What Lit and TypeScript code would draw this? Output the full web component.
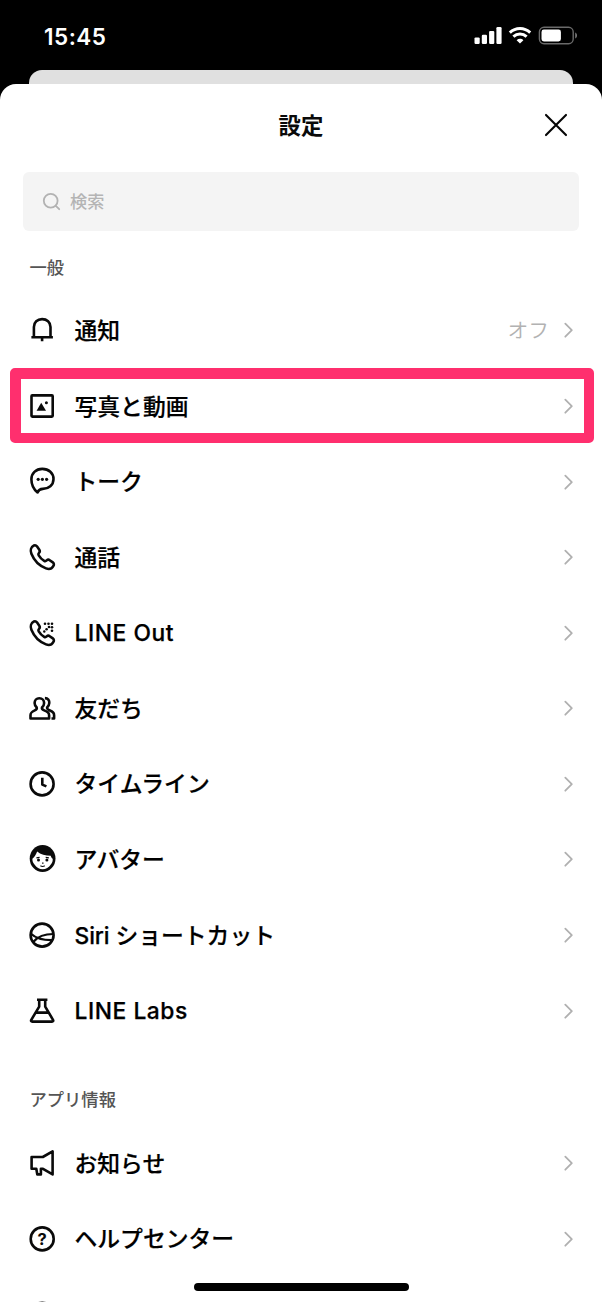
import { LitElement, html, css, svg, nothing, type SVGTemplateResult } from "lit";
import { customElement, property } from "lit/decorators.js";

const handset = svg`<path d="M7.9 4.5C9.3 3.9 10.3 4.5 11.1 5.6L13.3 8.7C14.1 9.9 13.9 10.9 13 11.8C12.1 12.7 12.1 13.3 12.7 14.3C14.1 16.7 15.8 18.4 18.2 19.8C19.2 20.4 19.8 20.3 20.7 19.4C21.6 18.6 22.6 18.4 23.7 19.2L26.8 21.4C28.1 22.3 28.2 23.8 27.3 25.1C25.8 27.7 23 28.6 20 27.4C13.7 25 8 19.3 5.4 12.8C4.1 9.4 5 5.8 7.9 4.5Z"/>`;

const icons: Record<string, SVGTemplateResult> = {
  bell: svg`<path d="M5.4 23.3H26.9M7.9 23.3V13C7.9 8.2 11.4 5.1 16.1 5.1S24.5 8.2 24.5 13V23.3M16.1 24V27.2"/>`,
  photo: svg`<rect x="5.5" y="5.4" width="21.2" height="21.2" rx="0.8"/>
    <path class="solid" d="M10.6 20.8L15.2 12.8L20 20.8Z"/><circle class="solid" cx="20.4" cy="12.7" r="1.5"/>`,
  talk: svg`<path d="M16.3 2.9C22.8 2.9 27.5 7.2 27.5 13C27.5 19.2 22.6 22.8 16.8 22.9C14 23 12.4 24.2 11.5 26.4C7.5 23.2 5.4 18.6 5.4 13.3C5.4 7.4 9.8 2.9 16.3 2.9Z"/>
    <g class="solid"><circle cx="12.2" cy="13.3" r="1.6"/><circle cx="16.4" cy="13.3" r="1.6"/><circle cx="20.6" cy="13.3" r="1.6"/></g>`,
  call: handset,
  lineout: svg`${handset}<g class="solid">
    <circle cx="19" cy="6.8" r="1.3"/><circle cx="22.5" cy="6.8" r="1.3"/><circle cx="26" cy="6.8" r="1.3"/>
    <circle cx="23" cy="10" r="1.3"/><circle cx="26" cy="10.3" r="1.3"/>
    <circle cx="20.6" cy="12.2" r="1.3"/><circle cx="18.3" cy="14.5" r="1.2"/><circle cx="26" cy="13.8" r="1.3"/></g>`,
  friends: svg`<path d="M13.3 6.3C10.4 6.3 8.6 8.4 8.6 11C8.6 13 9.5 14.3 10.7 15.5C11.1 17 10.4 17.7 8.8 18.4C5.4 19.9 4.5 20.7 4.5 23.3V26.5H23.1V23.3C23.1 20.7 22 19.9 18.2 18.4C16.2 17.6 15.6 17 16 15.5C17.3 14.3 18.1 13 18.1 11C18.1 8.4 16.3 6.3 13.3 6.3Z"/>
    <path d="M18.9 6.1C22 6.2 23.5 8.4 23.3 11C23.2 13.4 22.2 14.4 21.1 15.5C20.9 16.9 21.7 17.5 23.4 18.3C27 20 28.1 20.7 28.1 23.3V26.5H25.5"/>`,
  clock: svg`<circle cx="16.1" cy="15.9" r="11.5"/><path d="M16.3 9.7V16.6L20.4 18.4"/>`,
  avatar: svg`<ellipse class="solid" cx="16.6" cy="15.5" rx="12.9" ry="13.6"/>
    <path class="face" d="M11.2 8.6C9.6 12.5 8.3 14.4 6.4 15.8C6.3 18 6.9 19.8 8.3 21.3C10.6 24.5 13.3 26.3 16.6 26.3S22.8 24.5 25 21.3C26.4 19.8 26.9 18 26.7 15.8C25.6 15.2 25.2 14.3 24.7 12.8C19.5 12.7 14.6 11.6 11.2 8.6Z"/>
    <g class="solid"><circle cx="12.5" cy="17" r="1.5"/><circle cx="20.9" cy="17" r="1.5"/></g>
    <path class="fine" d="M10.4 14.9L13.6 14.4M19.7 14.4L22.9 14.9M16.1 20.1H17.5M14.4 22.8Q16.6 24.1 18.8 22.8"/>`,
  siri: svg`<circle cx="16.1" cy="16.1" r="11.5"/><path class="mid" d="M5 14.8C9 18.6 14 21.3 26 21.2M7.5 22.8C12 17.2 18 15 27.4 15"/>`,
  labs: svg`<path d="M11 4.8H21.4M13.2 4.8V11.6L5.3 24.8C4.7 25.9 5.2 26.6 6.3 26.6H26C27.1 26.6 27.6 25.9 27 24.8L19.2 11.6V4.8M9.4 17.6H23"/>`,
  notice: svg`<path d="M5.6 10H16.8L26.6 4.4V27.4L17 21.8H14.9V27.4H11.3L10.3 21.8H5.6Z"/>`,
  help: svg`<circle cx="16.2" cy="15.9" r="11.5"/><text x="16.2" y="21.9" text-anchor="middle">?</text>`,
  info: svg`<circle cx="16.2" cy="16.2" r="11.5"/>`,
};

@customElement("setting-row")
class SettingRow extends LitElement {
  @property() icon = "";
  @property() label = "";
  @property() value = "";
  @property({ type: Boolean }) marked = false;

  static styles = css`
    :host { display: block; height: 75.57px; flex: none; }
    .row { position: relative; display: flex; align-items: center; height: 100%; padding: 0 26.5px 0 26px; }
    .icon { width: 32px; height: 32px; flex: none; fill: none; stroke: #0a0a0a; stroke-width: 2.6; stroke-linejoin: round; }
    .solid { fill: #0a0a0a; stroke: none; }
    .face { fill: #fff; stroke: none; }
    .fine { stroke-width: 1.1; }
    .mid { stroke-width: 2.2; }
    .icon text { fill: #0a0a0a; stroke: none; font: 700 16.5px Inter, sans-serif; }
    .label { flex: 1; margin-left: 16.5px; padding-top: 1.2px; font-size: 22.8px; font-weight: 500; line-height: 32px; color: #000; white-space: pre; -webkit-text-stroke: 0.2px #000; }
    .latin { letter-spacing: 0.55px; -webkit-text-stroke: 0.25px #000; }
    .tight { letter-spacing: -0.1px; }
    .value { font-size: 20.8px; font-weight: 350; color: #b2b2b2; margin-right: 14.5px; padding-top: 2px; line-height: 30px; }
    .chevron { width: 12px; height: 18px; flex: none; fill: none; stroke: #b0b0b0; stroke-width: 1.8; stroke-linecap: round; stroke-linejoin: round; }
    .mark { position: absolute; left: 10px; right: 8px; top: -0.2px; height: 75px; box-sizing: border-box; border: 11px solid #ff2f6e; border-right-width: 10px; border-bottom-width: 10px; border-radius: 5px; }
  `;

  private text() {
    const parts = this.label.match(/[\x20-\x7e]+|[^\x20-\x7e]+/g) ?? [];
    return parts.map((p) => (/^[\x20-\x7e]/.test(p) ? html`<span class="latin ${parts.length > 1 ? "tight" : ""}">${p}</span>` : p));
  }

  render() {
    return html`<div class="row">
      <svg class="icon" viewBox="0 0 32 32">${icons[this.icon]}</svg>
      <span class="label">${this.text()}</span>
      ${this.value ? html`<span class="value">${this.value}</span>` : nothing}
      ${this.label ? html`<svg class="chevron" viewBox="0 0 12 18"><path d="M1.3 2.7L7.8 9.2L1.3 15.7"/></svg>` : nothing}
      ${this.marked ? html`<div class="mark"></div>` : nothing}
    </div>`;
  }
}

interface Item { icon: string; label: string; value?: string; marked?: boolean; }

const general: Item[] = [
  { icon: "bell", label: "通知", value: "オフ" },
  { icon: "photo", label: "写真と動画", marked: true },
  { icon: "talk", label: "トーク" },
  { icon: "call", label: "通話" },
  { icon: "lineout", label: "LINE Out" },
  { icon: "friends", label: "友だち" },
  { icon: "clock", label: "タイムライン" },
  { icon: "avatar", label: "アバター" },
  { icon: "siri", label: "Siri ショートカット" },
  { icon: "labs", label: "LINE Labs" },
];

const about: Item[] = [
  { icon: "notice", label: "お知らせ" },
  { icon: "help", label: "ヘルプセンター" },
  { icon: "info", label: "" },
];

@customElement("app-root")
class AppRoot extends LitElement {
  static styles = css`
    :host { display: block; position: relative; width: 602px; height: 1302px; overflow: hidden; background: #000; font-family: Inter, "Noto Sans CJK JP", sans-serif; }
    .screen { display: flex; flex-direction: column; height: 100%; }
    .status { display: flex; align-items: center; justify-content: space-between; height: 70px; flex: none; box-sizing: border-box; padding: 2px 24px 0 44px; }
    .time { color: #fff; font-size: 22.5px; font-weight: 600; line-height: 28px; letter-spacing: 0.5px; padding-top: 1px; }
    .indicators { width: 104px; height: 20px; }
    .behind { height: 14px; flex: none; margin: 0 29px; background: #e0e0e0; border-radius: 13px 13px 0 0; }
    .sheet { flex: 1; min-height: 0; overflow: hidden; display: flex; flex-direction: column; background: #fff; border-radius: 16px 16px 0 0; }
    .header { display: grid; grid-template-columns: 1fr auto 1fr; align-items: center; height: 82px; flex: none; padding: 0 34px; }
    .title { grid-column: 2; padding-top: 2px; font-size: 22.4px; font-weight: 700; line-height: 32px; color: #0a0a0a; }
    .close { justify-self: end; width: 24px; height: 24px; fill: none; stroke: #050505; stroke-width: 2.1; stroke-linecap: round; }
    .search { display: flex; align-items: center; height: 59px; flex: none; margin: 6px 23px 0; box-sizing: border-box; padding-left: 19px; gap: 8px; background: #f4f4f4; border-radius: 6px; }
    .glass { width: 20px; height: 20px; fill: none; stroke: #b2b2b2; stroke-width: 1.8; stroke-linecap: round; }
    .placeholder { font-size: 17.2px; font-weight: 500; color: #b4b4b4; line-height: 26px; }
    .section { flex: none; box-sizing: border-box; padding-left: 29.5px; font-size: 17.3px; font-weight: 500; color: #555; line-height: 26px; }
    .first { height: 61.7px; padding-top: 23.5px; }
    .second { height: 77px; padding-top: 39px; }
    .home { position: absolute; left: 193.6px; bottom: 11.5px; width: 215px; height: 7.6px; border-radius: 4px; background: #000; }
  `;

  private rows(items: Item[]) {
    return items.map((i) => html`<setting-row .icon=${i.icon} .label=${i.label} .value=${i.value ?? ""} .marked=${!!i.marked}></setting-row>`);
  }

  render() {
    return html`<div class="screen">
        <div class="status">
          <span class="time">15:45</span>
          <svg class="indicators" viewBox="0 0 104 20" fill="#fff">
            <rect x="0.5" y="11.4" width="5.2" height="6.6" rx="1.2"/><rect x="7.8" y="8.7" width="5.2" height="9.3" rx="1.2"/>
            <rect x="15.1" y="4.9" width="5.2" height="13.1" rx="1.2"/><rect x="22.4" y="1" width="5.2" height="17" rx="1.2"/>
            <g fill="none" stroke="#fff" stroke-width="3"><path d="M35.8 6.6C41.7 1.1 50.3 1.1 56.2 6.6"/><path d="M39.4 10.6C43.2 7.1 48.8 7.1 52.6 10.6"/></g>
            <path d="M46 17.6L42.6 14.2C44.6 12.3 47.4 12.3 49.4 14.2Z"/>
            <rect x="65.4" y="1.3" width="33.8" height="16.4" rx="4.6" fill="none" stroke="#6a6a6a" stroke-width="1.4"/>
            <rect x="67.5" y="3.5" width="19.4" height="12" rx="2.4"/><path d="M101.2 6.5C103.6 7.3 103.6 11.7 101.2 12.5Z" fill="#777"/>
          </svg>
        </div>
        <div class="behind"></div>
        <div class="sheet">
          <div class="header"><span class="title">設定</span>
            <svg class="close" viewBox="0 0 24 24"><path d="M2 1.9L22 22.1M22 1.9L2 22.1"/></svg></div>
          <div class="search">
            <svg class="glass" viewBox="0 0 20 20"><circle cx="8.7" cy="8.8" r="6.9"/><path d="M13.8 13.9L17.2 17.2"/></svg>
            <span class="placeholder">検索</span></div>
          <div class="section first">一般</div>
          ${this.rows(general)}
          <div class="section second">アプリ情報</div>
          ${this.rows(about)}
        </div>
      </div>
      <div class="home"></div>`;
  }
}
